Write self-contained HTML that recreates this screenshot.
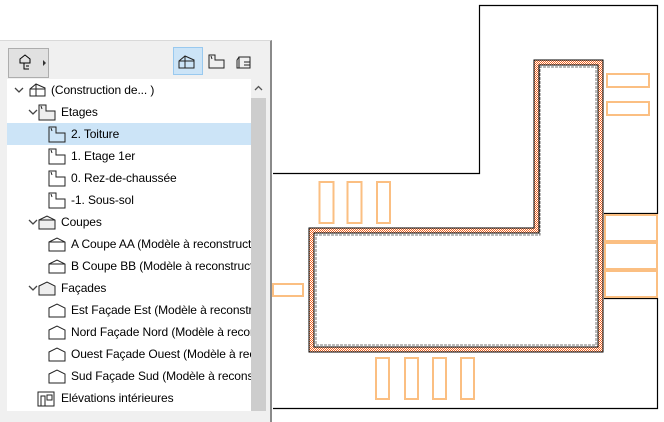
<!DOCTYPE html>
<html><head><meta charset="utf-8"><style>
body{margin:0;width:664px;height:422px;background:#fff;position:relative;overflow:hidden;font-family:"Liberation Sans",sans-serif;}
#panel{position:absolute;left:0;top:40px;width:272px;height:382px;background:#f0f0f0;border-top:1px solid #d9d9d9;border-right:2px solid #8a8a8a;box-sizing:border-box}
#list{position:absolute;left:7px;top:79px;width:244px;height:332px;background:#fff;overflow:hidden}
.row{position:absolute;left:0;height:22px;width:244px;font-size:12px;line-height:22px;color:#000;white-space:nowrap;letter-spacing:-0.1px}
.row svg{position:absolute;top:3px}
.sel{background:#cce4f7}
.row svg.chev{top:8px}
</style></head><body>
<div id="panel"></div>
<div style="position:absolute;left:8px;top:48px;width:41px;height:30px;background:#e1e1e1;border:1px solid #adadad;box-sizing:border-box"></div>
<svg style="position:absolute;left:8px;top:48px" width="42" height="30"><path d="M12 11 l5-4 5 4 v4 h-10z M16 15 v6 h4 M18 18 h3 M18 21 h3" fill="none" stroke="#000"/><path d="M35 12 l3 3-3 3z" fill="#333"/></svg>
<div style="position:absolute;left:173px;top:47px;width:30px;height:28px;background:#cce4f7;border:1px solid #99c9ef;box-sizing:border-box"></div>
<svg style="position:absolute;left:173px;top:47px" width="100" height="30">
<path d="M6 21 v-7 l6-5 9 4 v8z M12 9 v12 M6 14 h15" fill="none" stroke="#222"/>
<path d="M36 8 h6 v5 h9 v8 h-15z M38 9 l1 3" fill="none" stroke="#222"/>
<path d="M66 10 h11 v11 h-11z M66 10 l-2 3 v8 h2 M71 15 h6 M71 18 h6 M71 21 h6" fill="none" stroke="#222"/>
</svg>
<div id="list">
<div class="row" style="top:0"><svg class="chev" style="left:7px" width="10" height="6"><path d="M1 1 l4 4 4-4" fill="none" stroke="#444" stroke-width="1.3"/></svg><svg style="left:21px" width="20" height="16"><path d="M2 14 v-7 l6-5 9 4 v8z M8 2 v12 M2 7 h15" fill="none" stroke="#222"/></svg><span style="position:absolute;left:44px">(Construction de... )</span></div>
<div class="row" style="top:22px"><svg class="chev" style="left:21px" width="10" height="6"><path d="M1 1 l4 4 4-4" fill="none" stroke="#444" stroke-width="1.3"/></svg><svg style="left:31px" width="20" height="18"><path d="M1 1 h7 v6 h9 v9 h-16z M3 2 l1 3" fill="#eee" stroke="#222"/></svg><span style="position:absolute;left:54px">Etages</span></div>
<div class="row sel" style="top:44px"><svg style="left:41px" width="20" height="18"><path d="M1 1 h7 v6 h9 v9 h-16z M3 2 l1 3" fill="none" stroke="#222"/></svg><span style="position:absolute;left:64px">2. Toiture</span></div>
<div class="row" style="top:66px"><svg style="left:41px" width="20" height="18"><path d="M1 1 h7 v6 h9 v9 h-16z M3 2 l1 3" fill="none" stroke="#222"/></svg><span style="position:absolute;left:64px">1. Etage 1er</span></div>
<div class="row" style="top:88px"><svg style="left:41px" width="20" height="18"><path d="M1 1 h7 v6 h9 v9 h-16z M3 2 l1 3" fill="none" stroke="#222"/></svg><span style="position:absolute;left:64px">0. Rez-de-chaussée</span></div>
<div class="row" style="top:110px"><svg style="left:41px" width="20" height="18"><path d="M1 1 h7 v6 h9 v9 h-16z M3 2 l1 3" fill="none" stroke="#222"/></svg><span style="position:absolute;left:64px">-1. Sous-sol</span></div>
<div class="row" style="top:132px"><svg class="chev" style="left:21px" width="10" height="6"><path d="M1 1 l4 4 4-4" fill="none" stroke="#444" stroke-width="1.3"/></svg><svg style="left:31px" width="20" height="18"><path d="M1 6 l8-4 8 4 v9 h-16z M1 6 h16" fill="#eee" stroke="#222"/></svg><span style="position:absolute;left:54px">Coupes</span></div>
<div class="row" style="top:154px"><svg style="left:41px" width="20" height="18"><path d="M1 6 l8-4 8 4 v9 h-16z M1 6 h16" fill="none" stroke="#222"/></svg><span style="position:absolute;left:64px">A Coupe AA (Modèle à reconstructi</span></div>
<div class="row" style="top:176px"><svg style="left:41px" width="20" height="18"><path d="M1 6 l8-4 8 4 v9 h-16z M1 6 h16" fill="none" stroke="#222"/></svg><span style="position:absolute;left:64px">B Coupe BB (Modèle à reconstructi</span></div>
<div class="row" style="top:198px"><svg class="chev" style="left:21px" width="10" height="6"><path d="M1 1 l4 4 4-4" fill="none" stroke="#444" stroke-width="1.3"/></svg><svg style="left:31px" width="20" height="18"><path d="M1 6 l8-4 8 4 v9 h-16z" fill="#eee" stroke="#222"/></svg><span style="position:absolute;left:54px">Façades</span></div>
<div class="row" style="top:220px"><svg style="left:41px" width="20" height="18"><path d="M1 6 l8-4 8 4 v9 h-16z" fill="none" stroke="#222"/></svg><span style="position:absolute;left:64px">Est Façade Est (Modèle à reconstru</span></div>
<div class="row" style="top:242px"><svg style="left:41px" width="20" height="18"><path d="M1 6 l8-4 8 4 v9 h-16z" fill="none" stroke="#222"/></svg><span style="position:absolute;left:64px">Nord Façade Nord (Modèle à recon</span></div>
<div class="row" style="top:264px"><svg style="left:41px" width="20" height="18"><path d="M1 6 l8-4 8 4 v9 h-16z" fill="none" stroke="#222"/></svg><span style="position:absolute;left:64px">Ouest Façade Ouest (Modèle à reco</span></div>
<div class="row" style="top:286px"><svg style="left:41px" width="20" height="18"><path d="M1 6 l8-4 8 4 v9 h-16z" fill="none" stroke="#222"/></svg><span style="position:absolute;left:64px">Sud Façade Sud (Modèle à reconstr</span></div>
<div class="row" style="top:308px"><svg style="left:30px" width="20" height="18"><path d="M1 2 h16 v14 h-16z M4 16 v-10 h4 v10 M10 5 h5 v5 h-5z" fill="none" stroke="#222"/></svg><span style="position:absolute;left:54px">Elévations intérieures</span></div>
</div>
<svg style="position:absolute;left:251px;top:79px" width="15" height="19"><path d="M4 11 l3.5-3.5 3.5 3.5" fill="none" stroke="#555" stroke-width="1.3"/></svg>
<div style="position:absolute;left:251px;top:98px;width:15px;height:313px;background:#cdcdcd"></div>
<svg style="position:absolute;left:0;top:0" width="664" height="422">
<defs><pattern id="h" width="2" height="2" patternUnits="userSpaceOnUse"><rect width="2" height="2" fill="#fff"/><rect width="1" height="1" fill="#f26522"/><rect x="1" y="1" width="1" height="1" fill="#f26522"/></pattern></defs>
<g fill="none" stroke="#000" stroke-width="1.2">
<path d="M273 173.5 H479.5 V5.5 H657.5 V213.5 H604"/>
<path d="M604 298.5 H657.5 V408.5 H273"/>
</g>
<path d="M309 352 V228 H534 V60 H603 V352z M314 347 H598 V65 H539 V233 H314z" fill="url(#h)" fill-rule="evenodd" stroke="#000" stroke-width="1"/>
<path d="M316 345 H596 V67 H540 V235 H316z" fill="none" stroke="#777" stroke-dasharray="3 1"/>
<g fill="none" stroke="#fbbf82" stroke-width="2">
<rect x="319.5" y="182" width="14" height="41"/><rect x="347.5" y="182" width="14" height="41"/><rect x="377" y="182" width="13" height="41"/>
<rect x="607" y="74" width="42" height="13"/><rect x="607" y="102" width="42" height="13"/>
<rect x="273" y="284" width="30" height="12"/>
<rect x="376" y="358" width="13" height="41"/><rect x="405" y="358" width="13" height="41"/><rect x="433" y="358" width="13" height="41"/><rect x="461" y="358" width="13" height="41"/>
<rect x="605" y="215" width="52" height="26"/><rect x="605" y="243" width="52" height="26"/><rect x="605" y="271" width="52" height="26"/>
</g>
</svg>
</body></html>
